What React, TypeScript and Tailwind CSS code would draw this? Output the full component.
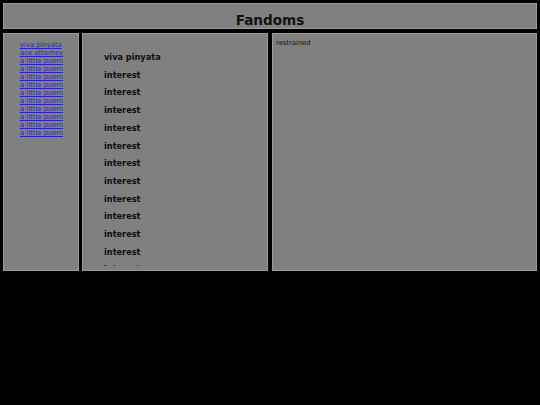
const links = [
  'viva pinyata',
  'ace attorney',
  ...Array.from({ length: 10 }, () => 'a little poem'),
];

const interests = ['viva pinyata', ...Array.from({ length: 12 }, () => 'interest')];

const font = { fontFamily: '"DejaVu Sans", Verdana, sans-serif' };

export default function App() {
  return (
    <div className="h-[405px] w-[540px] overflow-hidden bg-black p-[3px]" style={font}>
      <header className="flex h-[26px] items-end justify-center border border-[#9a9a9a] bg-[#808080]">
        <h1 className="text-[13.6px] font-bold leading-none text-[#111]">Fandoms</h1>
      </header>

      <div className="mt-[4px] flex h-[238px] gap-[3px]">
        {/* fandom links */}
        <nav className="w-[76px] shrink-0 border border-[#9a9a9a] bg-[#808080] pl-[16px] pt-[7px]">
          {links.map((name, i) => (
            <a
              key={i}
              href="#"
              className="block text-[6.8px] leading-[8px] text-[#2424cc] underline"
            >
              {name}
            </a>
          ))}
        </nav>

        {/* interests */}
        <main className="w-[186px] shrink-0 border border-[#9a9a9a] bg-[#808080] pl-[21px] pt-[15px]">
          <div className="h-[217px] overflow-hidden">
            {interests.map((label, i) => (
              <p key={i} className="text-[8.2px] font-bold leading-[17.7px] text-[#0d0d0d]">
                {label}
              </p>
            ))}
          </div>
        </main>

        <section className="ml-[1px] flex-1 border border-[#9a9a9a] bg-[#808080] pl-[3px] pt-[5px]">
          <p className="text-[6.8px] leading-[8px] text-[#111]">restrained</p>
        </section>
      </div>
    </div>
  );
}
